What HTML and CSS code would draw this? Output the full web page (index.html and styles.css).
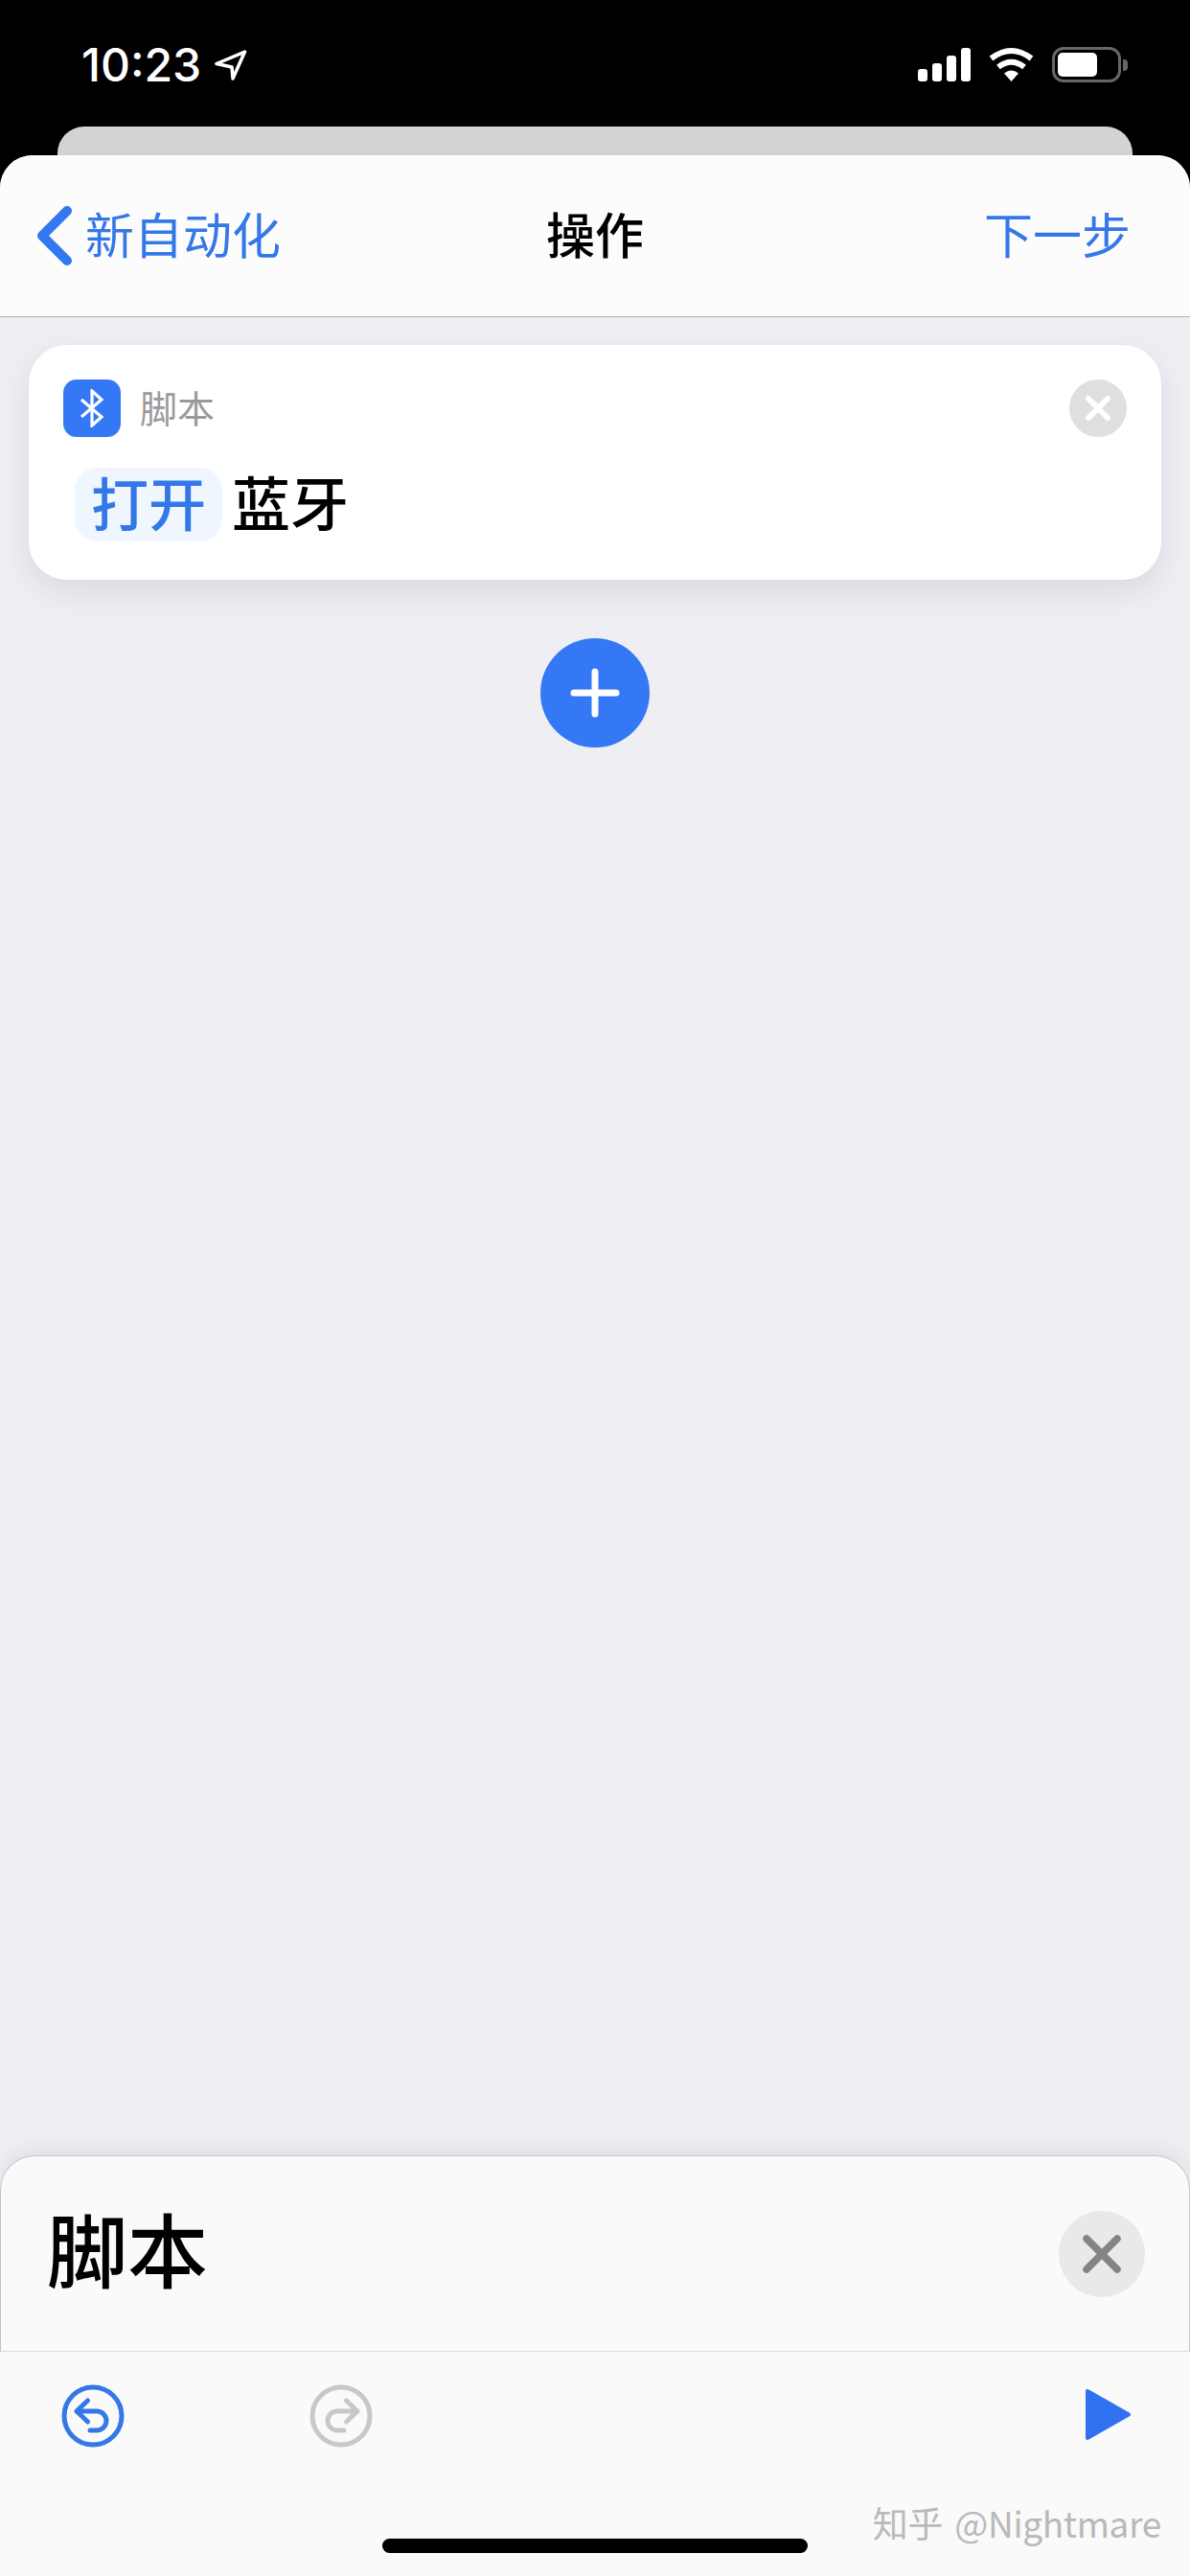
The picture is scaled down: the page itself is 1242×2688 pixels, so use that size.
FILE: index.html
```html
<!DOCTYPE html>
<html lang="zh">
<head>
<meta charset="utf-8">
<title>操作</title>
<link rel="stylesheet" href="styles.css">
</head>
<body>
<div class="phone">
  <header class="status">
    <div class="clock">
      <span class="time">10:23</span>
      <svg class="loc" viewBox="0 0 34 32"><path d="M31.5 2 2 14.5 18 18 19 30Z"/></svg>
    </div>
    <div class="indicators">
      <div class="signal"><i class="b1"></i><i class="b2"></i><i class="b3"></i><i class="b4"></i></div>
      <svg class="wifi" viewBox="0 0 47 36">
        <path class="wedge" d="M23.5 36 16 27.5 Q23.5 21.5 31 27.5Z"/>
        <path class="arc" d="M10 21 Q23.5 10.5 37 21"/>
        <path class="arc" d="M2.5 12 Q23.5 -4 44.5 12"/>
      </svg>
      <div class="battery"><div class="shell"><div class="charge"></div></div><div class="nub"></div></div>
    </div>
  </header>
  <div class="peek"></div>
  <main class="sheet">
    <nav class="nav">
      <a class="back">
        <svg class="chev" viewBox="0 0 38 62"><path d="M32 5 6 31 32 57"/></svg>
        <span class="back-label">新自动化</span>
      </a>
      <h1 class="title">操作</h1>
      <a class="next">下一步</a>
    </nav>
    <section class="content">
      <article class="card">
        <div class="card-head">
          <span class="app-icon">
            <svg viewBox="0 0 26 40"><path d="M2 11 23 29 13 38V2L23 11 2 29"/></svg>
          </span>
          <span class="app-name">脚本</span>
          <span class="card-close">
            <svg viewBox="0 0 60 60"><path d="M20 20 40 40M40 20 20 40"/></svg>
          </span>
        </div>
        <div class="card-body">
          <span class="pill">打开</span>
          <span class="subject">蓝牙</span>
        </div>
      </article>
      <button class="add">
        <svg viewBox="0 0 114 114"><path d="M57 35V79M35 57H79"/></svg>
      </button>
    </section>
    <section class="panel">
      <div class="panel-head">
        <h2 class="panel-title">脚本</h2>
        <span class="panel-close">
          <svg viewBox="0 0 90 90"><path d="M29 29 61 61M61 29 29 61"/></svg>
        </span>
      </div>
      <div class="toolbar">
        <svg class="round undo" viewBox="0 0 66 66"><circle cx="33" cy="33" r="30"/><path d="M27.5 17 16 28 27.5 39M16 28H37A10 10 0 0 1 37 48H30"/></svg>
        <svg class="round redo" viewBox="0 0 66 66"><circle cx="33" cy="33" r="30"/><path d="M38.5 17 50 28 38.5 39M50 28H29A10 10 0 0 0 29 48H36"/></svg>
        <svg class="play" viewBox="0 0 49 55"><path d="M3 3 46 27.5 3 52Z"/></svg>
      </div>
    </section>
  </main>
  <div class="home-bar"></div>
  <div class="watermark">知乎 @Nightmare</div>
</div>
</body>
</html>
```

FILE: styles.css
```css
* { box-sizing: border-box; }
html, body { margin: 0; padding: 0; }
body { background: #000; font-family: "Noto Sans CJK SC", "Noto Sans", sans-serif; }

.phone {
  position: relative;
  width: 1242px;
  height: 2688px;
  display: flex;
  flex-direction: column;
  background: #000;
  overflow: hidden;
}

/* status bar */
.status {
  height: 132px;
  flex: none;
  display: flex;
  justify-content: space-between;
  align-items: flex-start;
  padding: 49px 65px 0 85px;
}
.clock { display: flex; align-items: center; gap: 14px; height: 37px; }
.time {
  font-family: Inter, "Liberation Sans", sans-serif;
  font-size: 48px;
  font-weight: 500;
  line-height: 37px;
  letter-spacing: 0;
  color: #fff;
}
.loc { width: 34px; height: 32px; }
.loc path { fill: none; stroke: #fff; stroke-width: 3.5; stroke-linejoin: round; }
.indicators { display: flex; align-items: flex-start; gap: 19px; }
.signal { display: flex; align-items: flex-end; gap: 5px; height: 36px; }
.signal i { display: block; width: 10px; background: #fff; border-radius: 3px; }
.b1 { height: 13px; }
.b2 { height: 19px; }
.b3 { height: 27px; }
.b4 { height: 35px; }
.wifi { width: 47px; height: 36px; }
.wedge { fill: #fff; }
.arc { fill: none; stroke: #fff; stroke-width: 6; }
.battery { display: flex; align-items: center; gap: 2px; height: 37px; }
.shell {
  width: 72px;
  height: 37px;
  border: 3px solid #666;
  border-radius: 12px;
  padding: 3px;
}
.charge { width: 41px; height: 25px; background: #fff; border-radius: 5px; }
.nub { width: 5px; height: 12px; background: #666; border-radius: 0 4px 4px 0; }

.peek {
  height: 30px;
  flex: none;
  margin: 0 60px;
  background: #d3d3d6;
  border-radius: 28px 28px 0 0;
}

/* main sheet */
.sheet {
  flex: 1;
  display: flex;
  flex-direction: column;
  min-height: 0;
  background: #eeeef3;
  border-radius: 34px 34px 0 0;
  overflow: hidden;
}
.nav {
  position: relative;
  height: 169px;
  flex: none;
  display: flex;
  align-items: center;
  justify-content: space-between;
  padding: 0 62px 0 38px;
  background: #fcfcfd;
  border-bottom: 1px solid #b2b2b5;
  font-size: 51px;
  color: #3478e8;
}
.back { display: flex; align-items: center; gap: 13px; line-height: 60px; }
.back-label { margin-bottom: 6px; }
.chev { width: 38px; height: 62px; }
.chev path { fill: none; stroke: #3478f0; stroke-width: 10; stroke-linecap: round; stroke-linejoin: round; }
.title {
  position: absolute;
  left: 0;
  right: 0;
  margin: 0 0 6px;
  text-align: center;
  font-size: 51px;
  font-weight: 500;
  line-height: 60px;
  color: #000;
  pointer-events: none;
}
.next { line-height: 60px; margin-bottom: 6px; }

.content {
  flex: 1;
  display: flex;
  flex-direction: column;
  align-items: center;
  padding: 29px 30px 0;
  min-height: 0;
}
.card {
  width: 100%;
  height: 245px;
  flex: none;
  padding: 36px 36px 0;
  background: #fff;
  border-radius: 40px;
  box-shadow: 0 12px 32px rgba(40, 40, 70, 0.1);
}
.card-head { display: flex; align-items: center; height: 60px; }
.app-icon {
  width: 60px;
  height: 60px;
  display: flex;
  align-items: center;
  justify-content: center;
  background: #3478f6;
  border-radius: 14px;
}
.app-icon svg { width: 26px; height: 40px; }
.app-icon path { fill: none; stroke: #fff; stroke-width: 3.2; stroke-linejoin: miter; }
.app-name { margin: 0 0 3px 20px; font-size: 39px; line-height: 57px; color: #9a9a9c; }
.card-close {
  width: 60px;
  height: 60px;
  margin-left: auto;
  background: #dfdfe1;
  border-radius: 50%;
}
.card-close svg { display: block; width: 60px; height: 60px; }
.card-close path { fill: none; stroke: #fff; stroke-width: 6; stroke-linecap: round; }
.card-body { display: flex; align-items: center; margin: 32px 0 0 12px; height: 77px; }
.pill {
  height: 77px;
  padding: 0 17px;
  line-height: 70px;
  font-size: 60px;
  font-weight: 500;
  color: #3478e8;
  background: #eff6fe;
  border-radius: 24px;
}
.subject { margin: 0 0 7px 10px; font-size: 61px; font-weight: 500; line-height: 70px; color: #000; }

.add {
  width: 114px;
  height: 114px;
  flex: none;
  margin-top: 61px;
  padding: 0;
  border: 0;
  background: #3478f6;
  border-radius: 50%;
}
.add svg { display: block; width: 114px; height: 114px; }
.add path { fill: none; stroke: #fff; stroke-width: 7; stroke-linecap: round; }

/* bottom panel */
.panel {
  flex: none;
  height: 439px;
  display: flex;
  flex-direction: column;
  background: #fafafb;
  border-radius: 36px 36px 0 0;
  box-shadow: 0 -6px 20px rgba(40, 40, 70, 0.07);
}
.panel-head {
  height: 205px;
  flex: none;
  display: flex;
  align-items: center;
  justify-content: space-between;
  padding: 0 46px 0 48px;
  border: 1px solid #c4c4c8;
  border-bottom-color: #dcdcde;
  border-radius: 36px 36px 0 0;
}
.panel-title { margin: 0 0 14px; font-size: 84px; font-weight: 500; line-height: 100px; color: #000; }
.panel-close {
  width: 90px;
  height: 90px;
  background: #e9e9ea;
  border-radius: 50%;
}
.panel-close svg { display: block; width: 90px; height: 90px; }
.panel-close path { fill: none; stroke: #848486; stroke-width: 7.5; stroke-linecap: round; }
.toolbar {
  flex: 1;
  display: flex;
  align-items: flex-start;
  padding: 34px 61px 0 64px;
}
.round { width: 66px; height: 66px; fill: none; stroke-width: 5; stroke-linecap: round; stroke-linejoin: round; }
.undo { stroke: #3478e8; }
.redo { stroke: #c8c8c9; margin-left: 193px; }
.play { width: 49px; height: 55px; margin: 4px 0 0 auto; }
.play path { fill: #3071f2; stroke: #3071f2; stroke-width: 4; stroke-linejoin: round; }

/* overlays */
.home-bar {
  position: absolute;
  left: 399px;
  top: 2649px;
  width: 444px;
  height: 15px;
  background: #000;
  border-radius: 8px;
}
.watermark {
  position: absolute;
  right: 30px;
  top: 2607px;
  font-size: 37px;
  line-height: 50px;
  color: #b9b9b9;
  word-spacing: 4px;
  letter-spacing: -0.3px;
  white-space: nowrap;
}
```
